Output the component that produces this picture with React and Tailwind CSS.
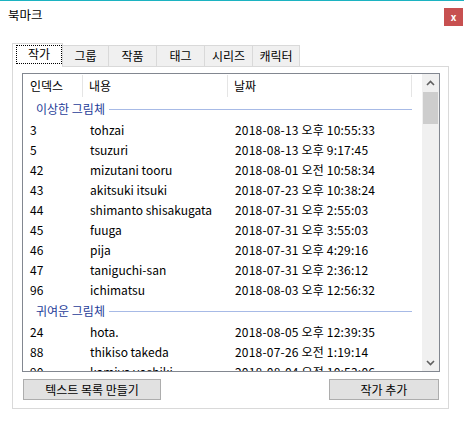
import React from "react";

const groups = [
  {
    name: "이상한 그림체",
    rows: [
      ["3", "tohzai", "2018-08-13 오후 10:55:33"],
      ["5", "tsuzuri", "2018-08-13 오후 9:17:45"],
      ["42", "mizutani tooru", "2018-08-01 오전 10:58:34"],
      ["43", "akitsuki itsuki", "2018-07-23 오후 10:38:24"],
      ["44", "shimanto shisakugata", "2018-07-31 오후 2:55:03"],
      ["45", "fuuga", "2018-07-31 오후 3:55:03"],
      ["46", "pija", "2018-07-31 오후 4:29:16"],
      ["47", "taniguchi-san", "2018-07-31 오후 2:36:12"],
      ["96", "ichimatsu", "2018-08-03 오후 12:56:32"],
    ],
  },
  {
    name: "귀여운 그림체",
    rows: [
      ["24", "hota.", "2018-08-05 오후 12:39:35"],
      ["88", "thikiso takeda", "2018-07-26 오전 1:19:14"],
      ["90", "kamiya yoshiki", "2018-08-04 오전 10:53:06"],
    ],
  },
];

const tabs = ["그룹", "작품", "태그", "시리즈", "캐릭터"];
const tabW = ["w-[46px]", "w-[48px]", "w-[48px]", "w-[48px]", "w-[47px]"];

export default function App() {
  return (
    <div
      className="w-[464px] h-[423px] bg-white overflow-hidden text-[12px] text-black"
      style={{ fontFamily: '"Noto Sans CJK KR", "Noto Sans", sans-serif' }}
    >
      <div className="h-px bg-[#1cb3c1]" />
      <div className="flex h-[42px] items-start">
        <div className="pl-[8px] pt-[5px] text-[12.5px] leading-[18px]">북마크</div>
        <div className="ml-auto mt-[7px] mr-px w-[19px] h-[18px] bg-[#c75050] flex items-center justify-center text-white font-bold text-[10px] leading-none">
          x
        </div>
      </div>
      {/* tabs */}
      <div className="flex items-end h-[23px] pl-[12px] relative z-10">
        <div className="w-[51px] h-[24px] -mb-px bg-white border border-[#d9d9d9] border-b-0 flex items-start pt-[1px] pl-[3px]">
          <div className="w-[46px] h-[19px] border border-dotted border-black flex items-center justify-center leading-none pb-px">
            작가
          </div>
        </div>
        {tabs.map((t, i) => (
          <div
            key={t}
            className={`${tabW[i]} h-[21px] bg-[#f0f0f0] border border-[#d9d9d9] border-l-0 border-b-0 flex items-center justify-center leading-none`}
          >
            {t}
          </div>
        ))}
      </div>
      {/* panel */}
      <div className="ml-[12px] w-[437px] h-[343px] border border-[#d9d9d9] bg-white pl-[9px] pr-[9px] pt-[6px]">
        <div className="w-[418px] h-[299px] border border-[#828790] flex overflow-hidden">
          <div className="flex-1 overflow-hidden">
            {/* header */}
            <div className="h-[24px] flex items-stretch">
              <div className="w-[60px] flex items-center pl-[7px] border-r border-[#e5e5e5] my-[1px]">인덱스</div>
              <div className="w-[145px] flex items-center pl-[6px] border-r border-[#e5e5e5] my-[1px]">내용</div>
              <div className="w-[184px] flex items-center pl-[6px] border-r border-[#e5e5e5] my-[1px]">날짜</div>
            </div>
            {groups.map((g) => (
              <div key={g.name}>
                <div className="h-[22px] flex items-center pl-[13px] pr-[10px]">
                  <span className="text-[#1f3d99] leading-none">{g.name}</span>
                  <div className="flex-1 h-px bg-[#a7bae6] ml-[4px]" />
                </div>
                {g.rows.map((r) => (
                  <div key={r[0]} className="h-[20px] flex items-center whitespace-nowrap">
                    <div className="w-[60px] pl-[7px]">{r[0]}</div>
                    <div className="w-[145px] pl-[7px]">{r[1]}</div>
                    <div className="pl-[7px] tracking-[0.2px]">{r[2]}</div>
                  </div>
                ))}
              </div>
            ))}
          </div>
          {/* scrollbar */}
          <div className="w-[17px] bg-[#f0f0f0] flex flex-col">
            <div className="h-[17px] flex items-center justify-center">
              <svg width="9" height="6" viewBox="0 0 9 6">
                <path d="M1 5 L4.5 1.5 L8 5" fill="none" stroke="#606060" strokeWidth="1.6" />
              </svg>
            </div>
            <div className="mx-px mt-px h-[32px] bg-[#cdcdcd]" />
            <div className="flex-1" />
            <div className="h-[17px] flex items-center justify-center">
              <svg width="9" height="6" viewBox="0 0 9 6">
                <path d="M1 1 L4.5 4.5 L8 1" fill="none" stroke="#606060" strokeWidth="1.6" />
              </svg>
            </div>
          </div>
        </div>
        <div className="flex mt-[7px] pl-px">
          <button className="w-[138px] h-[21px] bg-[#e1e1e1] border border-[#adadad] flex items-center justify-center leading-none">
            텍스트 목록 만들기
          </button>
          <button className="ml-auto w-[110px] h-[21px] bg-[#e1e1e1] border border-[#adadad] flex items-center justify-center leading-none">
            작가 추가
          </button>
        </div>
      </div>
    </div>
  );
}
